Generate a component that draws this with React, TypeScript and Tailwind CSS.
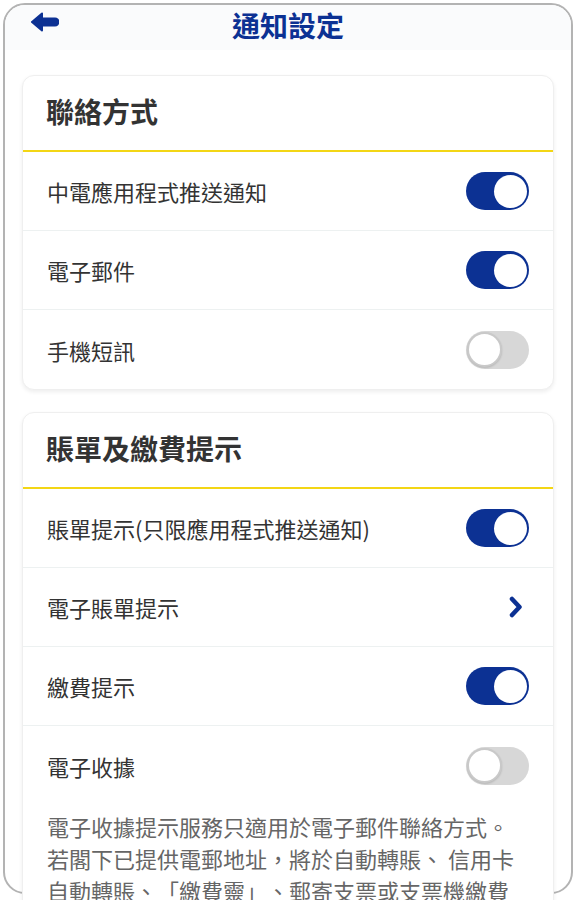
import { ReactNode } from 'react'

const FONT = { fontFamily: '"Noto Sans CJK TC", "Noto Sans", sans-serif' }

const Toggle = ({ on }: { on: boolean }) => (
  <div
    className={
      on
        ? 'w-[63px] h-[38px] rounded-full bg-[#0c3193] flex items-center justify-end pr-[2px]'
        : 'w-[63px] h-[38px] rounded-full bg-[#d7d7d7] flex items-center justify-start pl-[1px]'
    }
  >
    <div
      className={
        on
          ? 'w-[33px] h-[33px] rounded-full bg-white'
          : 'w-[35px] h-[35px] rounded-full bg-white border-2 border-[#c9c9c9] shadow-[0_1px_2px_rgba(0,0,0,0.15)]'
      }
    />
  </div>
)

const Chevron = () => (
  <svg width="16" height="22" viewBox="0 0 16 22" fill="none" className="mr-[5px]">
    <polyline
      points="4,3 11.5,11 4,19"
      stroke="#0c3193"
      strokeWidth="4.5"
      strokeLinecap="round"
      strokeLinejoin="round"
    />
  </svg>
)

type RowProps = { label: string; right: ReactNode; last?: boolean }

const Row = ({ label, right, last }: RowProps) => (
  <div
    className={
      last
        ? 'h-[79px] flex items-center justify-between pl-[24px] pr-[24px]'
        : 'h-[79px] flex items-center justify-between pl-[24px] pr-[24px] border-b border-[#edf1f1]'
    }
  >
    <span className="text-[22px] text-[#333333] leading-none">{label}</span>
    {right}
  </div>
)

const Card = ({ title, children }: { title: string; children: ReactNode }) => (
  <div className="rounded-[12px] border border-[#efefef] bg-white shadow-[0_2px_4px_rgba(0,0,0,0.07)] overflow-hidden">
    <div className="h-[76px] flex items-center pl-[23px] pb-[4px] border-b-2 border-[#f3d615]">
      <h2 className="text-[28px] font-bold text-[#333333] leading-none">{title}</h2>
    </div>
    {children}
  </div>
)

export default function App() {
  return (
    <div className="w-[576px] h-[900px] overflow-hidden bg-white p-[3px]" style={FONT}>
      <div className="h-[891px] rounded-[22px] border-2 border-[#b3b3b3] bg-white">
        {/* Header */}
        <div className="h-[45px] rounded-t-[20px] bg-[#fafbfc] relative flex items-start justify-center pt-[6px]">
          <button className="absolute left-[24px] top-[6px]" aria-label="Back">
            <svg width="30" height="22" viewBox="0 0 30 22">
              <path
                d="M3 11 L13 2.5 L13 7.5 L26 7.5 A3.5 3.5 0 0 1 26 14.5 L13 14.5 L13 19.5 Z"
                fill="#0c3193"
                stroke="#0c3193"
                strokeWidth="2"
                strokeLinejoin="round"
              />
            </svg>
          </button>
          <h1 className="text-[28px] font-bold text-[#0c3193] leading-none">通知設定</h1>
        </div>

        {/* Content */}
        <div className="px-[17px] pt-[25px] flex flex-col gap-[22px]">
          <Card title="聯絡方式">
            <Row label="中電應用程式推送通知" right={<Toggle on />} />
            <Row label="電子郵件" right={<Toggle on />} />
            <Row label="手機短訊" right={<Toggle on={false} />} last />
          </Card>

          <Card title="賬單及繳費提示">
            <Row label="賬單提示(只限應用程式推送通知)" right={<Toggle on />} />
            <Row label="電子賬單提示" right={<Chevron />} />
            <Row label="繳費提示" right={<Toggle on />} />
            <Row label="電子收據" right={<Toggle on={false} />} last />
            <p className="pl-[24px] pr-[32px] mt-[5px] pb-[20px] text-[22px] leading-[32px] text-[#666666] [text-spacing-trim:space-all]">
              電子收據提示服務只適用於電子郵件聯絡方式。若閣下已提供電郵地址，將於自動轉賬、 信用卡自動轉賬、「繳費靈」、郵寄支票或支票機繳費後，以電子郵件發送電子收據予閣下。
            </p>
          </Card>
        </div>
      </div>
    </div>
  )
}
